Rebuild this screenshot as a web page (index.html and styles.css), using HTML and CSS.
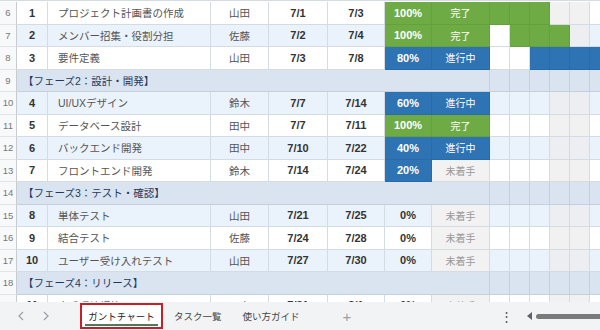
FILE: index.html
```html
<!DOCTYPE html>
<html lang="ja">
<head>
  <meta charset="UTF-8">
  <title>ガントチャート</title>
  <link rel="stylesheet" href="styles.css">
</head>
<body>
  <div class="sheet">
    <div class="row">
      <div class="rh">6</div>
      <div class="c no">1</div>
      <div class="c task">プロジェクト計画書の作成</div>
      <div class="c who">山田</div>
      <div class="c date">7/1</div>
      <div class="c date">7/3</div>
      <div class="c pct green">100%</div>
      <div class="c st green">完了</div>
      <div class="g green"></div><div class="g green"></div><div class="g green"></div><div class="g we"></div><div class="g we"></div><div class="g"></div>
    </div>
    <div class="row alt">
      <div class="rh">7</div>
      <div class="c no">2</div>
      <div class="c task">メンバー招集・役割分担</div>
      <div class="c who">佐藤</div>
      <div class="c date">7/2</div>
      <div class="c date">7/4</div>
      <div class="c pct green">100%</div>
      <div class="c st green">完了</div>
      <div class="g white"></div><div class="g green"></div><div class="g green"></div><div class="g green"></div><div class="g we"></div><div class="g"></div>
    </div>
    <div class="row">
      <div class="rh">8</div>
      <div class="c no">3</div>
      <div class="c task">要件定義</div>
      <div class="c who">山田</div>
      <div class="c date">7/3</div>
      <div class="c date">7/8</div>
      <div class="c pct blue">80%</div>
      <div class="c st blue">進行中</div>
      <div class="g"></div><div class="g"></div><div class="g blue"></div><div class="g blue"></div><div class="g blue"></div><div class="g blue"></div>
    </div>
    <div class="row phase">
      <div class="rh">9</div>
      <div class="c title">【フェーズ2：設計・開発】</div>
      <div class="g"></div><div class="g"></div><div class="g"></div><div class="g"></div><div class="g"></div><div class="g"></div>
    </div>
    <div class="row alt">
      <div class="rh">10</div>
      <div class="c no">4</div>
      <div class="c task">UI/UXデザイン</div>
      <div class="c who">鈴木</div>
      <div class="c date">7/7</div>
      <div class="c date">7/14</div>
      <div class="c pct blue">60%</div>
      <div class="c st blue">進行中</div>
      <div class="g"></div><div class="g"></div><div class="g"></div><div class="g we"></div><div class="g we"></div><div class="g"></div>
    </div>
    <div class="row">
      <div class="rh">11</div>
      <div class="c no">5</div>
      <div class="c task">データベース設計</div>
      <div class="c who">田中</div>
      <div class="c date">7/7</div>
      <div class="c date">7/11</div>
      <div class="c pct green">100%</div>
      <div class="c st green">完了</div>
      <div class="g"></div><div class="g"></div><div class="g"></div><div class="g we"></div><div class="g we"></div><div class="g"></div>
    </div>
    <div class="row alt">
      <div class="rh">12</div>
      <div class="c no">6</div>
      <div class="c task">バックエンド開発</div>
      <div class="c who">田中</div>
      <div class="c date">7/10</div>
      <div class="c date">7/22</div>
      <div class="c pct blue">40%</div>
      <div class="c st blue">進行中</div>
      <div class="g"></div><div class="g"></div><div class="g"></div><div class="g we"></div><div class="g we"></div><div class="g"></div>
    </div>
    <div class="row">
      <div class="rh">13</div>
      <div class="c no">7</div>
      <div class="c task">フロントエンド開発</div>
      <div class="c who">鈴木</div>
      <div class="c date">7/14</div>
      <div class="c date">7/24</div>
      <div class="c pct blue">20%</div>
      <div class="c st todo">未着手</div>
      <div class="g"></div><div class="g"></div><div class="g"></div><div class="g we"></div><div class="g we"></div><div class="g"></div>
    </div>
    <div class="row phase">
      <div class="rh">14</div>
      <div class="c title">【フェーズ3：テスト・確認】</div>
      <div class="g"></div><div class="g"></div><div class="g"></div><div class="g"></div><div class="g"></div><div class="g"></div>
    </div>
    <div class="row alt">
      <div class="rh">15</div>
      <div class="c no">8</div>
      <div class="c task">単体テスト</div>
      <div class="c who">山田</div>
      <div class="c date">7/21</div>
      <div class="c date">7/25</div>
      <div class="c pct">0%</div>
      <div class="c st todo">未着手</div>
      <div class="g"></div><div class="g"></div><div class="g"></div><div class="g we"></div><div class="g we"></div><div class="g"></div>
    </div>
    <div class="row">
      <div class="rh">16</div>
      <div class="c no">9</div>
      <div class="c task">結合テスト</div>
      <div class="c who">佐藤</div>
      <div class="c date">7/24</div>
      <div class="c date">7/28</div>
      <div class="c pct">0%</div>
      <div class="c st todo">未着手</div>
      <div class="g"></div><div class="g"></div><div class="g"></div><div class="g we"></div><div class="g we"></div><div class="g"></div>
    </div>
    <div class="row alt">
      <div class="rh">17</div>
      <div class="c no">10</div>
      <div class="c task">ユーザー受け入れテスト</div>
      <div class="c who">山田</div>
      <div class="c date">7/27</div>
      <div class="c date">7/30</div>
      <div class="c pct">0%</div>
      <div class="c st todo">未着手</div>
      <div class="g"></div><div class="g"></div><div class="g"></div><div class="g we"></div><div class="g we"></div><div class="g"></div>
    </div>
    <div class="row phase">
      <div class="rh">18</div>
      <div class="c title">【フェーズ4：リリース】</div>
      <div class="g"></div><div class="g"></div><div class="g"></div><div class="g"></div><div class="g"></div><div class="g"></div>
    </div>
    <div class="row">
      <div class="rh">19</div>
      <div class="c no">11</div>
      <div class="c task">本番環境構築</div>
      <div class="c who">田中</div>
      <div class="c date">7/31</div>
      <div class="c date">8/1</div>
      <div class="c pct">0%</div>
      <div class="c st todo">未着手</div>
      <div class="g"></div><div class="g"></div><div class="g"></div><div class="g we"></div><div class="g we"></div><div class="g"></div>
    </div>
  </div>

  <div class="tabs">
    <div class="nav">
      <svg width="8" height="10" viewBox="0 0 8 10"><path d="M6 1 L2 5 L6 9" fill="none" stroke="#9aa0a6" stroke-width="1.2"/></svg>
      <svg width="8" height="10" viewBox="0 0 8 10"><path d="M2 1 L6 5 L2 9" fill="none" stroke="#9aa0a6" stroke-width="1.2"/></svg>
    </div>
    <div class="tab active"><span>ガントチャート</span></div>
    <div class="tab">タスク一覧</div>
    <div class="tab">使い方ガイド</div>
    <div class="add">+</div>
    <div class="more">⋮</div>
    <div class="scroll">
      <svg width="6" height="8" viewBox="0 0 6 8"><path d="M5 0 L0 4 L5 8 Z" fill="#5f6368"/></svg>
      <div class="thumb"></div>
    </div>
  </div>
</body>
</html>
```

FILE: styles.css
```css
body {
  margin: 0;
  width: 600px;
  height: 330px;
  overflow: hidden;
  background: #fff;
  font-family: "Liberation Sans", "Noto Sans CJK JP", sans-serif;
  color: #333;
}

/* sheet grid */
.sheet {
  height: 302px;
  overflow: hidden;
  padding-top: 1px;
  box-sizing: border-box;
  border-top: 1px solid #d4dbe3;
}
.row {
  display: grid;
  grid-template-columns: 17px 31px 163px 58px 59px 57px 47px 58px repeat(6, 20px);
  height: 22.5px;
  width: 610px;
  background: #fff;
}
.row.alt { background: #eaf2fb; }
.row.phase { background: #d9e4f0; }

.rh, .c, .g {
  box-sizing: border-box;
  border-right: 1px solid #d4dbe3;
  border-bottom: 1px solid #d4dbe3;
  display: flex;
  align-items: center;
  white-space: nowrap;
  overflow: hidden;
}
.rh {
  justify-content: center;
  background: #f8f9fa;
  color: #777;
  font-size: 9.5px;
  border-right-color: #c8ccd0;
  border-bottom-color: #e2e4e6;
}
.no {
  justify-content: center;
  font-weight: bold;
  font-size: 11px;
  color: #333;
}
.task {
  padding-left: 10px;
  font-size: 10.5px;
  color: #555;
}
.who {
  justify-content: center;
  font-size: 10.5px;
  color: #555;
}
.date, .pct {
  justify-content: center;
  font-weight: bold;
  font-size: 11px;
  color: #333;
}
.st {
  justify-content: center;
  font-size: 10px;
  color: #fff;
}
.pct.green, .pct.blue { color: #fff; }
.title {
  grid-column: 2 / 9;
  padding-left: 6px;
  font-size: 10.5px;
  color: #1f3a60;
  border-right-color: #c4d0de;
  border-bottom-color: #c4d0de;
}
.phase .g { border-color: #c4d0de; }

.st.todo {
  background: #f2f2f2;
  color: #999;
}
.green {
  background: #6fab45;
  border-color: #64a03c;
}
.blue {
  background: #2e74b5;
  border-color: #2a6aa6;
}
.g.white { background: #fff; }
.g.we { background: #f1f1f1; }
.alt .g.we { background: #eceef1; }

/* sheet tabs */
.tabs {
  height: 28px;
  background: #f1f3f4;
  display: flex;
  align-items: center;
  font-size: 9.5px;
  color: #444;
  white-space: nowrap;
}
.nav {
  width: 80px;
  display: flex;
  gap: 17px;
  padding-left: 17px;
  box-sizing: border-box;
}
.tab {
  height: 26px;
  display: flex;
  align-items: center;
  padding: 0 10px 0 11px;
}
.tab.active {
  width: 83px;
  padding: 0;
  box-sizing: border-box;
  justify-content: center;
  border: 2px solid #c5202a;
  background: #fff;
  color: #222;
}
.tab.active span {
  border-bottom: 2px solid #55755c;
  padding: 0 3px 1px;
  margin-top: 3px;
}
.add {
  margin-left: 33px;
  font-size: 15px;
  color: #9aa0a6;
}
.more {
  margin-left: auto;
  font-size: 13px;
  color: #555;
  margin-right: 14px;
}
.scroll {
  width: 73px;
  display: flex;
  align-items: center;
  gap: 3px;
}
.thumb {
  flex: 1;
  height: 5px;
  border-radius: 3px 0 0 3px;
  background: #7a7a7a;
}
```
